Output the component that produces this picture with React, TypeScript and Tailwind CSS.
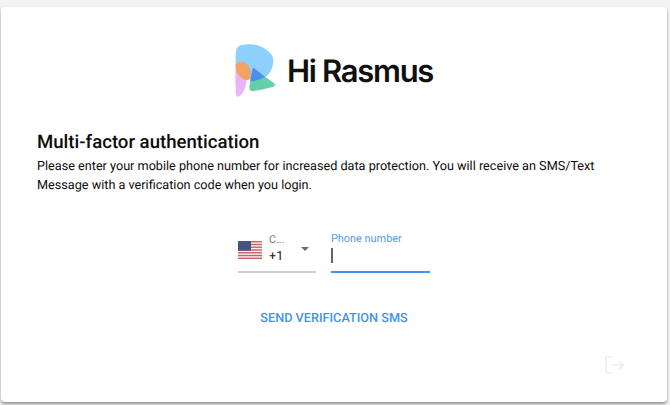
function Logo() {
  return (
    <svg width="41" height="54" viewBox="0 0 41 54" className="shrink-0">
      <path d="M0.7 19 C0.5 12 0.8 7 1.7 4.3 C4 1 9 0.3 15 0.3 C22 0.3 27 2.5 31.7 6 C36 9.5 38.3 12 38.3 16 C38.3 26 33 33 25 36 C16 38.5 7 33 0.7 22 Z" fill="#8dd0fd" />
      <path d="M0.7 19 L11.7 33 C11.7 37 11 41 10 44 C8 49 5 53 2.6 52.8 C1.2 52.5 0.9 50 0.7 47 C0.3 38 0.3 28 0.7 19 Z" fill="#ecb3f7" />
      <path d="M0.7 21 C1.5 18.5 4 17.5 6.7 17.7 C11 18 14.5 22 15.7 27.7 C16 32 15.2 35 13.3 36 C10 36.8 6 34 3.5 31 C1.5 28 0.5 24 0.7 21 Z" fill="#f3a263" />
      <path d="M30 32.7 L40 40 C40.6 41.5 38.5 43 36.7 43.3 C30 45 23 46.8 16.7 47 C15 46.8 14.3 45 14.3 42.7 L15.4 37.7 Z" fill="#65d0a8" />
      <path d="M17.7 24.3 C18.2 24 19 24 19.5 24.5 L30 32.7 C25 35.5 20 37.2 15 37.7 Z" fill="#4d90ec" />
    </svg>
  );
}

function Flag() {
  const stripes = [0, 2, 4, 6, 8, 10, 12];
  return (
    <svg width="24" height="18" viewBox="0 0 24 18" className="shrink-0">
      <rect width="24" height="18" fill="#f6eeee" />
      {stripes.map((s) => (
        <rect key={s} x="0" y={s * 1.385} width="24" height="1.385" fill="#c9636a" />
      ))}
      <rect width="13" height="9.7" fill="#46527f" />
    </svg>
  );
}

export default function App() {
  return (
    <div className="h-[405px] w-[670px] overflow-hidden bg-[#f3f3f3] pt-[7px] pl-px pr-[3px] font-['Roboto',sans-serif] [text-rendering:geometricPrecision]">
      <div className="relative flex h-[395px] flex-col rounded-[4px] bg-white shadow-[0_2px_3px_rgba(0,0,0,0.4)]">
        <div className="mt-[37px] flex items-center justify-center gap-[11px]">
          <Logo />
          <span className="mt-[2px] font-['Inter',sans-serif] text-[31px] leading-[40px] font-semibold tracking-[-1.3px] text-[#101010]">Hi Rasmus</span>
        </div>
        <div className="mt-[31px] pl-[36px] pr-[60px]">
          <h1 className="text-[18.6px] leading-[26px] font-medium text-[#0c0c0c]">Multi-factor authentication</h1>
          <p className="mt-[2px] text-[12.67px] leading-[19px] text-[#0c0c0c]">
            Please enter your mobile phone number for increased data protection. You will receive an SMS/Text Message with a verification code when you login.
          </p>
        </div>
        <div className="mt-[34px] flex justify-center gap-[15px]">
          <div className="flex h-[44px] w-[78px] border-b-2 border-[#d0d0d0]">
            <div className="mt-[12px]"><Flag /></div>
            <div className="ml-[7px] flex flex-col pt-[4px]">
              <span className="text-[10.8px] leading-[14px] text-[#777]">C...</span>
              <span className="mt-[2px] text-[12.6px] leading-[16px] text-[#222]">+1</span>
            </div>
            <span className="mt-[18px] ml-auto mr-[7px] h-0 w-0 border-x-[4px] border-t-[4px] border-x-transparent border-t-[#6b6b6b]" />
          </div>
          <div className="flex h-[44px] w-[99px] flex-col border-b-2 border-[#4593ee] pt-[3px]">
            <span className="text-[10.9px] leading-[14px] text-[#4f9df0]">Phone number</span>
            <span className="mt-[2px] h-[15px] w-[1.5px] bg-[#666]" />
          </div>
        </div>
        <div className="mt-[37px] flex justify-center">
          <span className="text-[12.7px] leading-[18px] font-medium text-[#4593ee]">SEND VERIFICATION SMS</span>
        </div>
        <div className="absolute right-[42px] bottom-[28px]">
          <svg width="20" height="18" viewBox="0 0 20 18" fill="none" stroke="#eeeeee" strokeWidth="1.6">
            <path d="M8 1H2a1 1 0 0 0-1 1v14a1 1 0 0 0 1 1h6" />
            <path d="M6 9h12M14 5l4 4-4 4" />
          </svg>
        </div>
      </div>
    </div>
  );
}
